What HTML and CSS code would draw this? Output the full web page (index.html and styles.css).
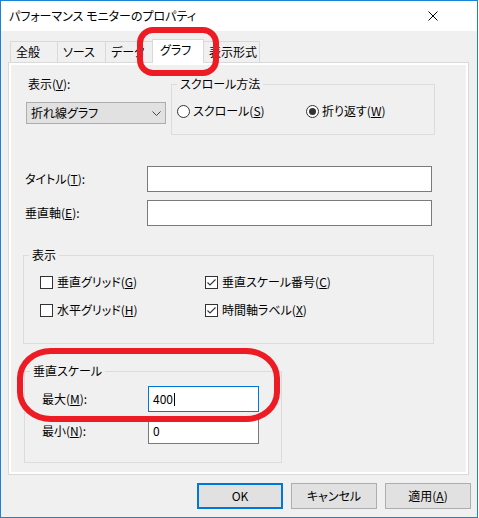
FILE: index.html
```html
<!DOCTYPE html>
<html lang="ja">
<head>
<meta charset="utf-8">
<title>パフォーマンス モニターのプロパティ</title>
<link rel="stylesheet" href="styles.css">
</head>
<body>
<div class="window">
  <div class="titlebar">
    <span class="title">パフォーマンス モニターのプロパティ</span>
    <svg class="close" width="10" height="10" viewBox="0 0 10 10"><path d="M0.5 0.5L9.5 9.5M9.5 0.5L0.5 9.5" stroke="#000" stroke-width="1" fill="none"/></svg>
  </div>
  <div class="client">
    <div class="tabs">
      <div class="tab tab-general">全般</div>
      <div class="tab tab-source">ソース</div>
      <div class="tab tab-data">データ</div>
      <div class="tab tab-graph active">グラフ</div>
      <div class="tab tab-format last">表示形式</div>
    </div>
    <div class="panel">
      <div class="page">
        <div class="top-row">
          <div class="view-col">
            <span class="lbl">表示(<u>V</u>):</span>
            <div class="select"><span>折れ線グラフ</span><svg width="9" height="5" viewBox="0 0 9 5"><path d="M0.5 0.5L4.5 4.5L8.5 0.5" stroke="#444" stroke-width="1" fill="none"/></svg></div>
          </div>
          <fieldset class="group scroll">
            <legend>スクロール方法</legend>
            <div class="radios">
              <label class="radio first"><span class="circle"></span><span class="txt">スクロール(<u>S</u>)</span></label>
              <label class="radio"><span class="circle on"><span class="dot"></span></span><span class="txt">折り返す(<u>W</u>)</span></label>
            </div>
          </fieldset>
        </div>
        <div class="field first-field"><span class="flabel">タイトル(<u>T</u>):</span><div class="input wide"></div></div>
        <div class="field second-field"><span class="flabel">垂直軸(<u>E</u>):</span><div class="input wide"></div></div>
        <fieldset class="group display">
          <legend>表示</legend>
          <div class="checks">
            <label class="check"><span class="box"></span><span class="txt">垂直グリッド(<u>G</u>)</span></label>
            <label class="check"><span class="box"><svg width="11" height="11" viewBox="0 0 11 11"><path d="M1.5 5.5L4 8L9.5 2.5" stroke="#333" stroke-width="1.1" fill="none"/></svg></span><span class="txt">垂直スケール番号(<u>C</u>)</span></label>
            <label class="check"><span class="box"></span><span class="txt">水平グリッド(<u>H</u>)</span></label>
            <label class="check"><span class="box"><svg width="11" height="11" viewBox="0 0 11 11"><path d="M1.5 5.5L4 8L9.5 2.5" stroke="#333" stroke-width="1.1" fill="none"/></svg></span><span class="txt">時間軸ラベル(<u>X</u>)</span></label>
          </div>
        </fieldset>
        <fieldset class="group vscale">
          <legend>垂直スケール</legend>
          <div class="srow"><span class="slabel">最大(<u>M</u>):</span><div class="input small focus"><span>400</span><span class="caret"></span></div></div>
          <div class="srow second"><span class="slabel">最小(<u>N</u>):</span><div class="input small"><span>0</span></div></div>
        </fieldset>
      </div>
    </div>
    <div class="buttons">
      <div class="btn default">OK</div>
      <div class="btn">キャンセル</div>
      <div class="btn"><span>適用(<u>A</u>)</span></div>
    </div>
  </div>
  <div class="mark mark-tab"></div>
  <div class="mark mark-scale"></div>
</div>
</body>
</html>
```

FILE: styles.css
```css
* { box-sizing: border-box; }

body {
  margin: 0;
  background: #fff;
  font-family: "Noto Sans CJK JP", "Noto Sans", sans-serif;
  font-size: 12px;
  line-height: 16px;
  font-feature-settings: "palt";
  color: #000;
}

u { text-decoration: underline; text-underline-offset: 1px; }

.window {
  position: relative;
  width: 478px;
  height: 518px;
  border: 1px solid #1883d7;
  background: #f0f0f0;
  display: flex;
  flex-direction: column;
}

.titlebar {
  height: 30px;
  flex: none;
  background: #fff;
  display: flex;
  align-items: center;
  justify-content: space-between;
  padding: 0 39px 0 8px;
}

.client {
  flex: 1;
  padding: 8px 8px 0 7px;
  display: flex;
  flex-direction: column;
}

.tabs {
  display: flex;
  align-items: flex-end;
  height: 23px;
  padding-left: 2px;
}

.tab {
  height: 21px;
  border-top: 1px solid #d9d9d9;
  border-left: 1px solid #d9d9d9;
  padding-left: 5px;
  line-height: 19px;
  white-space: nowrap;
  overflow: hidden;
}
.tab-general { width: 47px; }
.tab-source { width: 48px; }
.tab-data { width: 47px; }
.tab.active {
  width: 52px;
  height: 24px;
  margin-bottom: -1px;
  background: #fff;
  border-right: 1px solid #d9d9d9;
  padding-left: 7px;
  position: relative;
  z-index: 1;
}
.tab.last {
  width: 57px;
  margin-left: -1px;
  border-right: 1px solid #d9d9d9;
}

.panel {
  width: 461px;
  height: 413px;
  flex: none;
  border: 1px solid #d9d9d9;
  background: #fff;
  padding: 2px;
}

.page {
  height: 100%;
  background: #f0f0f0;
  padding: 11px 0 0 12px;
}

.top-row {
  display: flex;
  align-items: flex-start;
  gap: 5px;
  margin-left: 3px;
}

.view-col { width: 140px; }
.lbl { display: block; margin-left: 2px; }

.select {
  margin-top: 10px;
  height: 22px;
  border: 1px solid #adadad;
  background: #e1e1e1;
  display: flex;
  align-items: center;
  justify-content: space-between;
  padding: 0 4px 0 4px;
}

.group {
  margin: 0;
  border: 1px solid #dcdcdc;
  min-width: 0;
}
.group legend { padding: 0 3px; }

.scroll {
  width: 264px;
  padding: 11px 0 15px 5px;
}

.radios { display: flex; }
.radio { display: flex; align-items: center; gap: 3px; }
.radio.first { width: 129px; }
.circle {
  width: 13px;
  height: 13px;
  border: 1px solid #333;
  border-radius: 50%;
  background: #fff;
  display: flex;
  align-items: center;
  justify-content: center;
  flex: none;
}
.dot { width: 7px; height: 7px; border-radius: 50%; background: #333; }

.field {
  display: flex;
  align-items: center;
  height: 26px;
  margin-left: 2px;
}
.first-field { margin-top: 31px; }
.second-field { margin-top: 8px; }
.flabel { width: 122px; }

.input {
  height: 26px;
  border: 1px solid #7a7a7a;
  background: #fff;
  padding: 0 4px;
  display: flex;
  align-items: center;
}
.input.wide { width: 285px; }
.input.small { width: 111px; }
.input.focus { border-color: #0078d7; }
.caret { width: 1px; height: 13px; background: #000; margin-left: 1px; }

.display {
  width: 411px;
  margin-top: 21px;
  padding: 11px 0 25px 5px;
}
.checks {
  margin-left: 11px;
  display: grid;
  grid-template-columns: 165px auto;
  row-gap: 12px;
}
.check { display: flex; align-items: center; gap: 4px; }
.box {
  width: 13px;
  height: 13px;
  border: 1px solid #333;
  background: #fff;
  flex: none;
  display: flex;
}

.vscale {
  width: 258px;
  margin: 19px 0 0 1px;
  padding: 7px 0 18px 5px;
}
.srow { display: flex; align-items: center; }
.srow.second { margin-top: 6px; }
.slabel { width: 106px; margin-left: 12px; }

.buttons {
  display: flex;
  justify-content: flex-end;
  gap: 8px;
  margin-top: 8px;
  margin-right: -2px;
}
.btn {
  width: 86px;
  height: 26px;
  border: 1px solid #adadad;
  background: #e1e1e1;
  display: flex;
  align-items: center;
  justify-content: center;
}
.btn.default { border: 2px solid #0078d7; }

.mark {
  position: absolute;
  border: 6px solid #ed1c24;
  z-index: 5;
}
.mark-tab {
  left: 136px;
  top: 26px;
  width: 82px;
  height: 49px;
  border-radius: 16px;
}
.mark-scale {
  left: 16px;
  top: 347px;
  width: 263px;
  height: 74px;
  border-radius: 34px / 30px;
}
```
